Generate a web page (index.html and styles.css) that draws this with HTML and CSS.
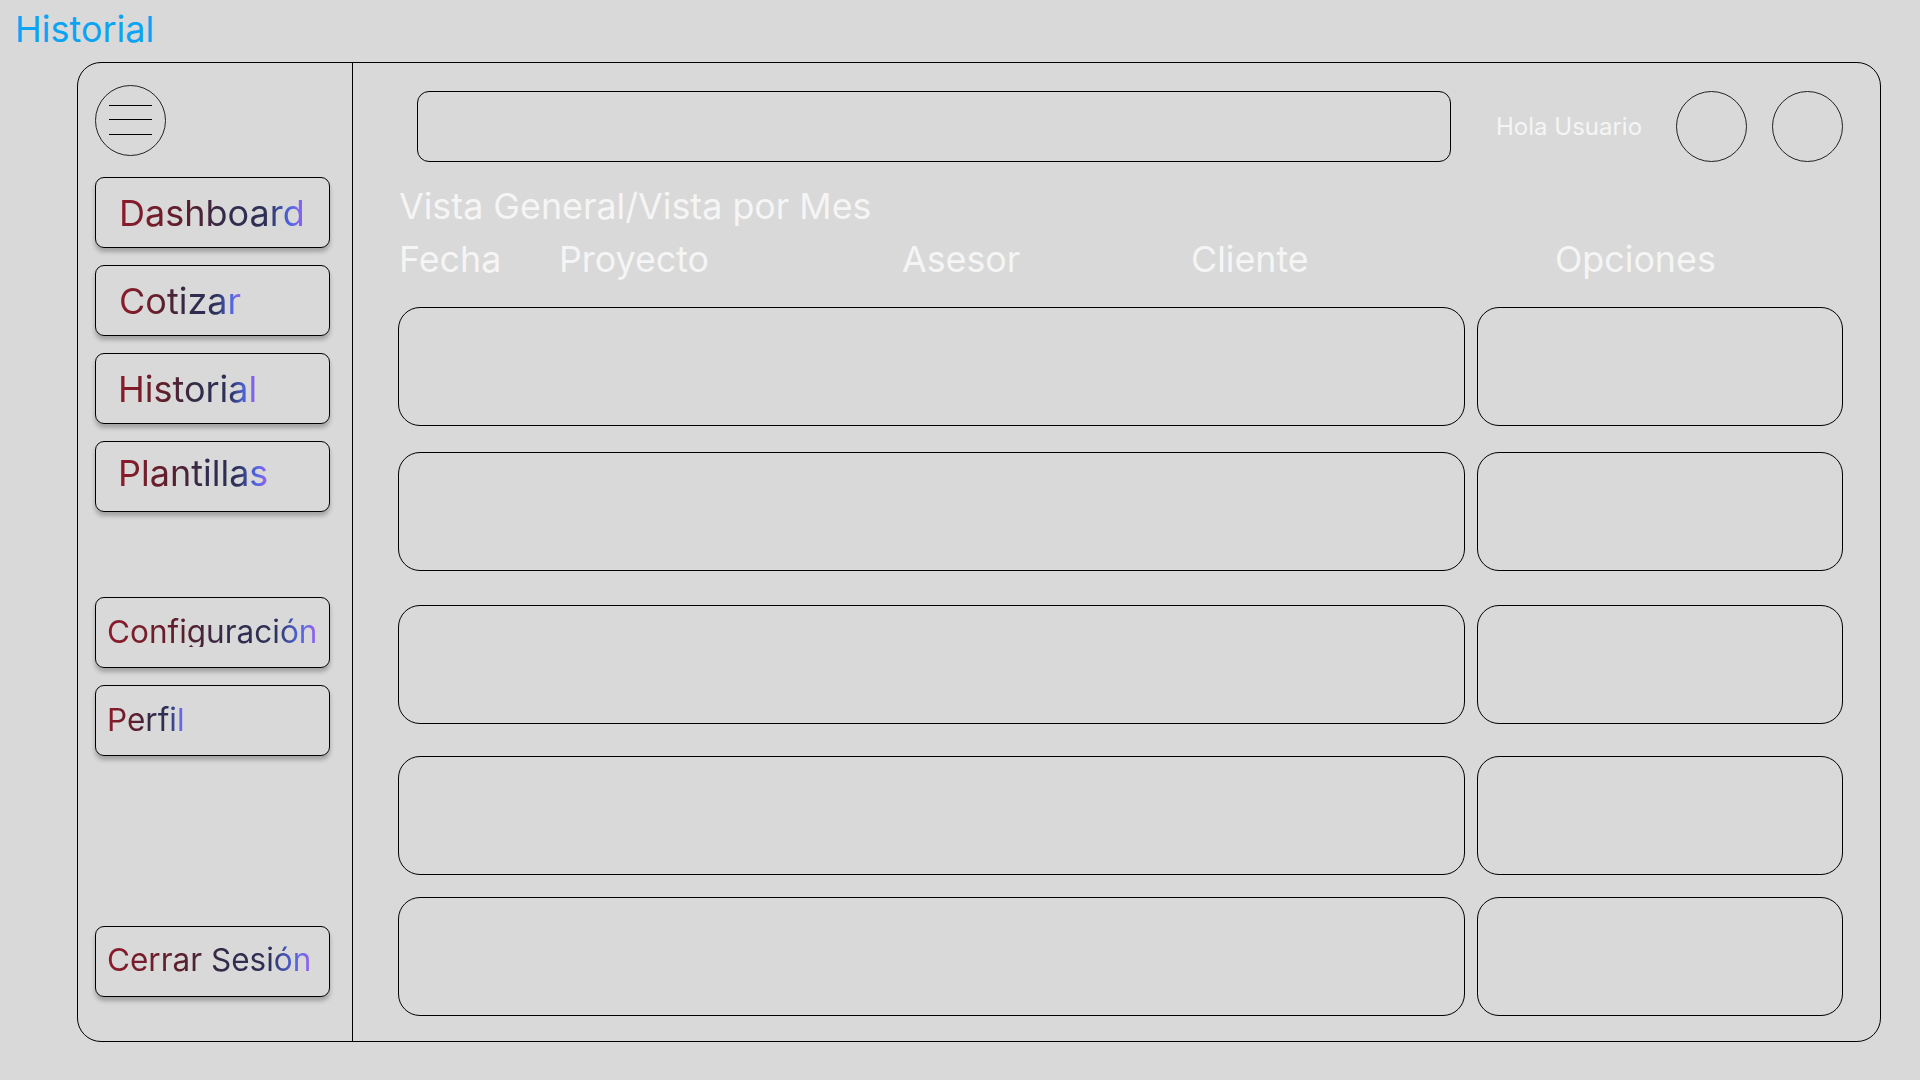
FILE: index.html
```html
<!DOCTYPE html>
<html lang="es">
<head>
<meta charset="utf-8">
<title>Historial</title>
<link rel="stylesheet" href="styles.css">
</head>
<body>
<h1 class="page-title">Historial</h1>
<div class="frame">
  <aside class="sidebar">
    <button class="menu-btn" aria-label="Menú">
      <svg width="71" height="71" viewBox="0 0 71 71">
        <line x1="14" y1="20.5" x2="57" y2="20.5" stroke="#000" stroke-width="1"/>
        <line x1="14" y1="34.5" x2="57" y2="34.5" stroke="#000" stroke-width="1"/>
        <line x1="14" y1="49.5" x2="57" y2="49.5" stroke="#000" stroke-width="1"/>
      </svg>
    </button>
    <nav class="nav nav-main">
      <a class="nav-btn nav-lg"><span class="grad">Dashboard</span></a>
      <a class="nav-btn nav-lg"><span class="grad">Cotizar</span></a>
      <a class="nav-btn nav-lg nav-tight"><span class="grad">Historial</span></a>
      <a class="nav-btn nav-lg nav-tight nav-raised"><span class="grad">Plantillas</span></a>
    </nav>
    <nav class="nav nav-secondary">
      <a class="nav-btn nav-sm"><span class="grad">Configuración</span></a>
      <a class="nav-btn nav-sm"><span class="grad">Perfil</span></a>
    </nav>
    <a class="nav-btn nav-sm nav-logout"><span class="grad">Cerrar Sesión</span></a>
  </aside>
  <main class="content">
    <header class="topbar">
      <div class="search"></div>
      <span class="greeting">Hola Usuario</span>
      <div class="round"></div>
      <div class="round"></div>
    </header>
    <h2 class="view-title">Vista General/Vista por Mes</h2>
    <div class="table-head">
      <span>Fecha</span>
      <span>Proyecto</span>
      <span>Asesor</span>
      <span>Cliente</span>
      <span class="opt-head">Opciones</span>
    </div>
    <div class="rows">
      <div class="row r1"><div class="cell-main"></div><div class="cell-opt"></div></div>
      <div class="row r2"><div class="cell-main"></div><div class="cell-opt"></div></div>
      <div class="row r3"><div class="cell-main"></div><div class="cell-opt"></div></div>
      <div class="row r4"><div class="cell-main"></div><div class="cell-opt"></div></div>
      <div class="row r5"><div class="cell-main"></div><div class="cell-opt"></div></div>
    </div>
  </main>
</div>
</body>
</html>
```
FILE: styles.css
```css
* { box-sizing: border-box; }

html, body {
  margin: 0;
  padding: 0;
  background: #d9d9d9;
  font-family: "Inter", "Noto Sans", sans-serif;
  width: 1920px;
  height: 1080px;
  overflow: hidden;
}

body {
  padding: 11px 0 0 15px;
}

.page-title {
  margin: 0;
  font-size: 36px;
  line-height: 1;
  font-weight: 400;
  color: #0ba4f4;
}

.frame {
  margin: 15px 0 0 62px;
  width: 1804px;
  height: 980px;
  border: 1px solid #000;
  border-radius: 24px;
  display: flex;
}

.sidebar {
  width: 275px;
  flex: none;
  border-right: 1px solid #000;
  padding: 22px 0 44px 17px;
  display: flex;
  flex-direction: column;
}

.menu-btn {
  width: 71px;
  height: 71px;
  border: 1px solid #222;
  border-radius: 50%;
  background: transparent;
  padding: 0;
  display: block;
}
.menu-btn svg { display: block; margin: -1px; }

.nav {
  display: flex;
  flex-direction: column;
  gap: 17px;
}

.nav-main { margin-top: 21px; }
.nav-secondary { margin-top: 85px; }

.nav-btn {
  width: 235px;
  height: 71px;
  border: 1px solid #000;
  border-radius: 9px;
  box-shadow: 0 4px 4px rgba(0, 0, 0, 0.25);
  display: flex;
  align-items: center;
  line-height: 1;
}

.nav-lg { font-size: 36px; padding-left: 23px; padding-top: 1px; }
.nav-lg.nav-tight { padding-left: 22px; }
.nav-lg.nav-raised { padding-top: 0; padding-bottom: 8px; }
.nav-sm { font-size: 31.5px; padding-left: 11px; padding-bottom: 2px; }

.nav-logout { margin-top: auto; padding-bottom: 3px; }

.grad {
  background: linear-gradient(90deg, #8e1b2b 0%, #5c1f2c 35%, #302b4a 58%, #2e3158 80%, #4f66e4 92%, #9c62ee 100%);
  -webkit-background-clip: text;
  background-clip: text;
  color: transparent;
  white-space: nowrap;
}

.content {
  flex: 1;
  padding: 28px 37px 0 45px;
  display: flex;
  flex-direction: column;
}

.topbar {
  display: flex;
  align-items: center;
  margin-left: 19px;
}

.search {
  width: 1034px;
  height: 71px;
  flex: none;
  border: 1px solid #000;
  border-radius: 12px;
}

.greeting {
  margin-left: 45px;
  margin-right: auto;
  font-size: 24px;
  color: #f5f5f5;
  line-height: 1;
  white-space: nowrap;
  flex: none;
}

.round {
  width: 71px;
  height: 71px;
  flex: none;
  border: 1px solid #222;
  border-radius: 50%;
}
.round + .round { margin-left: 25px; }

.view-title {
  margin: 27px 0 0 1px;
  font-size: 35.8px;
  font-weight: 400;
  line-height: 1;
  color: #f5f5f5;
}

.table-head {
  margin-top: 17px;
  display: grid;
  grid-template-columns: 161px 343px 289px 364px auto;
  font-size: 35.8px;
  line-height: 1;
  color: #f5f5f5;
}
.table-head span:first-child { padding-left: 1px; }

.rows {
  margin-top: 29px;
  display: flex;
  flex-direction: column;
}

.row {
  display: flex;
  gap: 12px;
  height: 119px;
}
.r2 { margin-top: 26px; }
.r3 { margin-top: 34px; }
.r4 { margin-top: 32px; }
.r5 { margin-top: 22px; }

.cell-main {
  flex: 1;
  border: 1px solid #000;
  border-radius: 22px;
}

.cell-opt {
  width: 366px;
  flex: none;
  border: 1px solid #000;
  border-radius: 22px;
}
```
